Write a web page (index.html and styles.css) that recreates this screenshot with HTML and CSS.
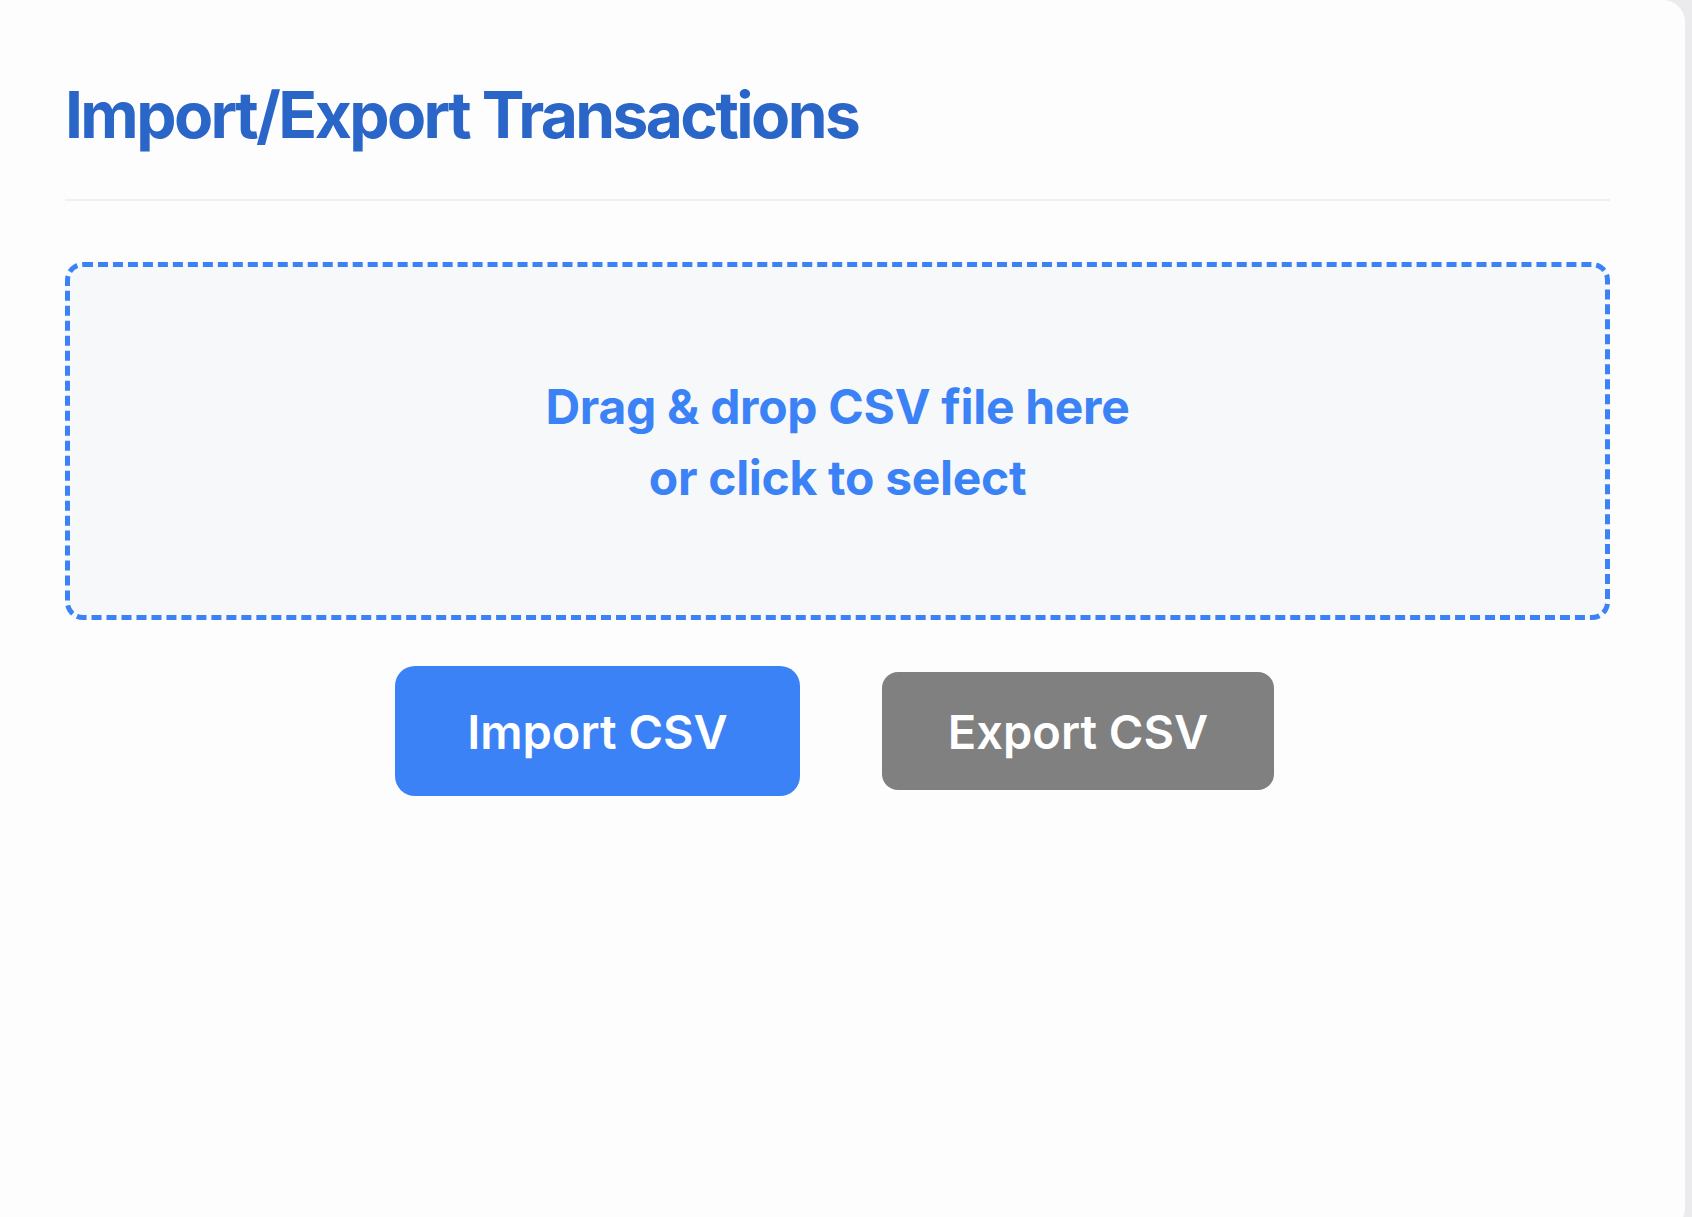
FILE: index.html
```html
<!DOCTYPE html>
<html lang="en">
<head>
<meta charset="utf-8">
<title>Import/Export Transactions</title>
<link rel="stylesheet" href="styles.css">
</head>
<body>
<div class="card">
  <h2 class="title">Import/Export Transactions</h2>
  <div class="divider"></div>
  <div class="dropzone">
    <p class="drop-text">Drag &amp; drop CSV file here<br>or click to select</p>
  </div>
  <div class="actions">
    <button class="btn btn-import">Import CSV</button>
    <button class="btn btn-export">Export CSV</button>
  </div>
</div>
</body>
</html>
```

FILE: styles.css
```css
html, body {
  margin: 0;
  padding: 0;
  height: 100%;
  overflow: hidden;
}
body {
  background: #ebebed;
  font-family: Inter, "Noto Sans", "Liberation Sans", sans-serif;
}
.card {
  box-sizing: border-box;
  width: 1685px;
  height: 1230px;
  background: #fdfdfd;
  border-radius: 0 22px 22px 0;
  padding: 76px 75px 0 65px;
}
.title {
  margin: 0;
  font-size: 64px;
  line-height: 77px;
  font-weight: 700;
  color: #2a65c8;
  letter-spacing: -2.6px;
}
.divider {
  height: 2px;
  background: #f0f0f1;
  margin-top: 46px;
}
.dropzone {
  box-sizing: border-box;
  margin-top: 61px;
  height: 358px;
  border: 5px dashed #3b82f6;
  border-radius: 18px;
  background: #f7f8fa;
  padding-top: 104px;
  text-align: center;
}
.drop-text {
  margin: 0;
  font-size: 48px;
  line-height: 71px;
  font-weight: 700;
  color: #3b82f6;
  letter-spacing: -0.3px;
}
.actions {
  display: flex;
  justify-content: center;
  align-items: center;
  gap: 82px;
  margin-top: 46px;
  padding-right: 6px;
}
.btn {
  border: none;
  color: #ffffff;
  font-family: Inter, "Noto Sans", "Liberation Sans", sans-serif;
  font-size: 47px;
  font-weight: 600;
  padding: 0;
}
.btn-import {
  width: 405px;
  height: 130px;
  background: #3b82f6;
  border-radius: 20px;
}
.btn-export {
  width: 392px;
  height: 118px;
  background: #808080;
  border-radius: 16px;
}
```
